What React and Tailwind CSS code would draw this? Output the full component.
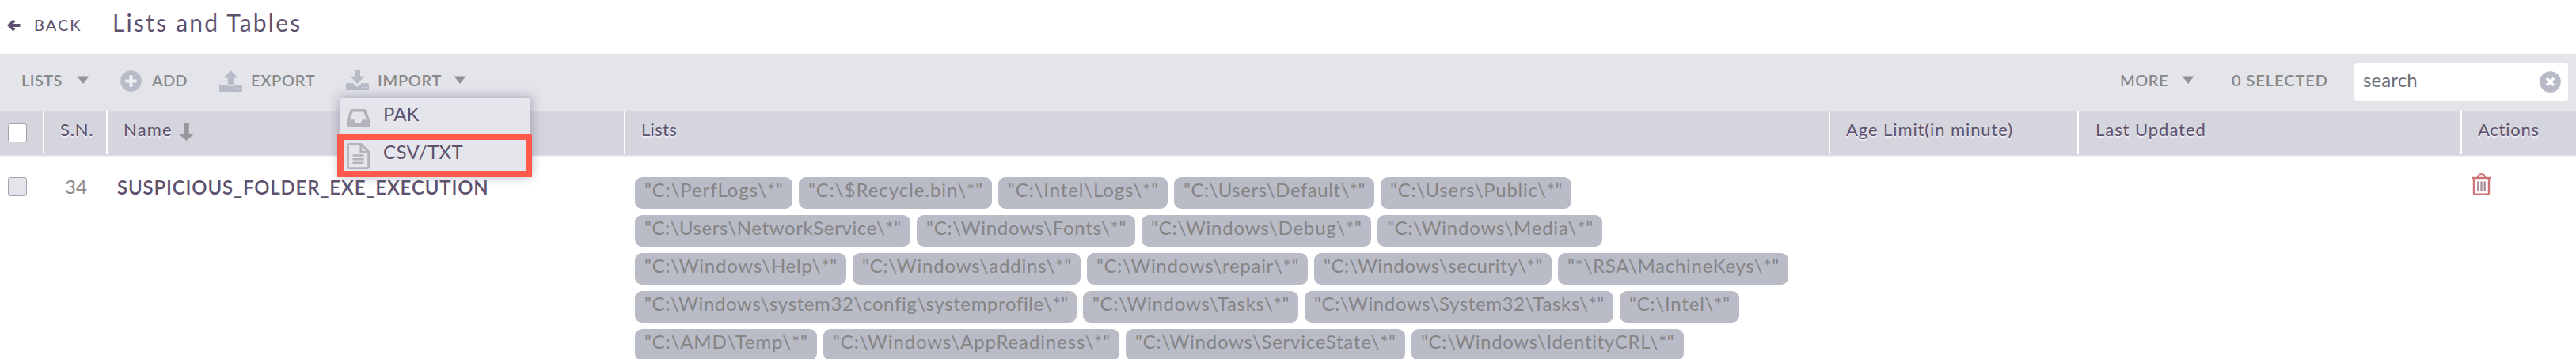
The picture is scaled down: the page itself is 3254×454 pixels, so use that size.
const rows = [
  [
    ['"C:\\PerfLogs\\*"', 'w-[199px] tracking-[0.9px]'],
    ['"C:\\$Recycle.bin\\*"', 'w-[244px] tracking-[0.95px]'],
    ['"C:\\Intel\\Logs\\*"', 'w-[214px] tracking-[0.87px]'],
    ['"C:\\Users\\Default\\*"', 'w-[253px] tracking-[0.55px]'],
    ['"C:\\Users\\Public\\*"', 'w-[241px] tracking-[0.75px]'],
  ],
  [
    ['"C:\\Users\\NetworkService\\*"', 'w-[348px] tracking-[0.6px]'],
    ['"C:\\Windows\\Fonts\\*"', 'w-[276px] tracking-[0.75px]'],
    ['"C:\\Windows\\Debug\\*"', 'w-[290px] tracking-[0.82px]'],
    ['"C:\\Windows\\Media\\*"', 'w-[284px] tracking-[0.78px]'],
  ],
  [
    ['"C:\\Windows\\Help\\*"', 'w-[267px] tracking-[0.77px]'],
    ['"C:\\Windows\\addins\\*"', 'w-[288px] tracking-[0.8px]'],
    ['"C:\\Windows\\repair\\*"', 'w-[279px] tracking-[0.7px]'],
    ['"C:\\Windows\\security\\*"', 'w-[300px] tracking-[0.56px]'],
    ['"*\\RSA\\MachineKeys\\*"', 'w-[291px] tracking-[0.72px]'],
  ],
  [
    ['"C:\\Windows\\system32\\config\\systemprofile\\*"', 'w-[558px] tracking-[0.62px]'],
    ['"C:\\Windows\\Tasks\\*"', 'w-[272px] tracking-[0.72px]'],
    ['"C:\\Windows\\System32\\Tasks\\*"', 'w-[390px] tracking-[0.61px]'],
    ['"C:\\Intel\\*"', 'w-[151px] tracking-[0.8px]'],
  ],
  [
    ['"C:\\AMD\\Temp\\*"', 'w-[230px] tracking-[0.86px]'],
    ['"C:\\Windows\\AppReadiness\\*"', 'w-[374px] tracking-[0.87px]'],
    ['"C:\\Windows\\ServiceState\\*"', 'w-[353px] tracking-[0.74px]'],
    ['"C:\\Windows\\IdentityCRL\\*"', 'w-[344px] tracking-[0.66px]'],
  ],
];

const Caret = ({ className }) => (
  <svg className={`h-[10px] w-4 shrink-0 ${className}`} viewBox="0 0 16 10">
    <path d="M0.5 0.5h15L8 10z" fill="#919196" />
  </svg>
);

const BackIcon = () => (
  <svg className="mt-6 ml-[9px] h-4 w-[17px] shrink-0" viewBox="0 0 17 16">
    <path d="M9 1.8L2.8 8L9 14.2M3 8h13.5" fill="none" stroke="#5d516d" strokeWidth="4" strokeLinejoin="miter" />
  </svg>
);

const AddIcon = () => (
  <svg className="mt-[21px] h-[27px] w-[27px] shrink-0" viewBox="0 0 27 27">
    <circle cx="13.5" cy="13.5" r="13.3" fill="#b9bac7" />
    <path d="M13.5 6.3v14.4M6.3 13.5h14.4" stroke="#eff0f4" strokeWidth="4" />
  </svg>
);

const ExportIcon = () => (
  <svg className="mt-[21px] h-[27px] w-[29px] shrink-0" viewBox="0 0 29 27" fill="#b9bac7">
    <path d="M14.5 0l9 9.5h-5.3v7.2q0 1.3-1.3 1.3h-4.8q-1.3 0-1.3-1.3V9.5H5.5z" />
    <path d="M1.5 18H9q1 2 3 2h5q2 0 3-2h7.5q1.5 0 1.5 1.5v6q0 1.5-1.5 1.5h-26Q0 27 0 25.5v-6Q0 18 1.5 18z" />
    <path d="M20.5 22.5h2v1.5h-2zM24.5 22.5h2v1.5h-2z" fill="#e4e5ea" />
  </svg>
);

const ImportIcon = () => (
  <svg className="mt-5 h-[26px] w-[29px] shrink-0" viewBox="0 0 29 26" fill="#b9bac7">
    <path d="M11.2 0h6.8v8.5h5.5L14.5 18L5.5 8.5h5.7z" />
    <path d="M1.5 17H9l4 4q1.5 1.2 3 0l4-4h7.5q1.5 0 1.5 1.5v6q0 1.5-1.5 1.5h-26Q0 26 0 24.5v-6Q0 17 1.5 17z" />
    <path d="M20.5 21.8h2v1.5h-2zM24.5 21.8h2v1.5h-2z" fill="#e4e5ea" />
  </svg>
);

const InboxIcon = () => (
  <svg className="mt-[14px] h-[23px] w-[29px] shrink-0" viewBox="0 0 29 23" fill="#b3b4bb">
    <path fillRule="evenodd" d="M7 0h15q2 0 2.8 2L29 13v8.5q0 1.5-1.5 1.5h-26Q0 23 0 21.5V13L4.2 2Q5 0 7 0zM7.8 3.5L4 13.2h5.2l2 4h6.6l2-4H25L21.2 3.5z" />
  </svg>
);

const FileIcon = () => (
  <svg className="mt-[9px] h-[33px] w-[29px] shrink-0" viewBox="0 0 29 33" fill="none" stroke="#b3b4bb" strokeWidth="2.8">
    <path d="M3 1.4H18L27.6 11V30q0 1.6-1.6 1.6H3Q1.4 31.6 1.4 30V3Q1.4 1.4 3 1.4z" />
    <path d="M17.8 1.5V11.2H27.5" />
    <path d="M7.5 15.5h14M7.5 20.2h14M7.5 24.9h14" strokeWidth="2.6" />
  </svg>
);

const SortIcon = () => (
  <svg className="mt-4 ml-[8px] h-[22px] w-[19px] shrink-0" viewBox="0 0 19 22" fill="#97979d">
    <path d="M6.2 0h6.6v13.5H19L9.5 22L0 13.5h6.2z" />
  </svg>
);

const ClearIcon = () => (
  <svg className="mt-[10px] h-[27px] w-[27px] shrink-0" viewBox="0 0 27 27">
    <circle cx="13.5" cy="13.5" r="13.3" fill="#b9bac7" />
    <path d="M9 9l9 9M18 9l-9 9" stroke="#fff" strokeWidth="3.8" />
  </svg>
);

const TrashIcon = () => (
  <svg className="mt-[23px] ml-3 h-7 w-[25px] shrink-0" viewBox="0 0 25 28" fill="none" stroke="#cd7277" strokeWidth="2">
    <path d="M0 6h25" strokeWidth="2.4" />
    <path d="M7.5 5.5L9 2.5Q9.6 1.3 11 1.3h3q1.4 0 2 1.2L17.5 5.5" />
    <path d="M3 6.5V25q0 1.8 1.8 1.8h15.4q1.8 0 1.8-1.8V6.5" strokeWidth="2.4" />
    <path d="M8.3 10.5v11.5M12.5 10.5v11.5M16.7 10.5v11.5" stroke="#a58d95" strokeWidth="2.3" />
  </svg>
);

const Th = ({ className, children }) => (
  <div className={`flex h-[55px] shrink-0 border-white text-[22px] leading-[47px] whitespace-nowrap [text-shadow:0_2px_0_#eeeef4] ${className}`}>
    {children}
  </div>
);

export default function App() {
  return (
    <div className="h-[454px] w-[3254px] overflow-hidden bg-white font-['Lato','Liberation_Sans',sans-serif] text-[#5d516d]">
      <header className="flex h-[68px] whitespace-nowrap">
        <BackIcon />
        <span className="ml-[17px] w-[99px] text-xl leading-[63px] tracking-[2px]">BACK</span>
        <h1 className="text-[30px] leading-[57px] tracking-[2.2px]">Lists and Tables</h1>
      </header>

      <div className="relative flex h-[72px] bg-[#e4e5ea] text-xl leading-[66px] font-semibold whitespace-nowrap text-[#888888]">
        <span className="ml-[27px] w-[70px] tracking-[0.4px]">LISTS</span>
        <Caret className="mt-7" />
        <div className="ml-[39px] flex w-[125px]">
          <AddIcon />
          <span className="ml-[13px] tracking-[0.2px]">ADD</span>
        </div>
        <div className="flex w-[160px]">
          <ExportIcon />
          <span className="ml-[11px] tracking-[0.7px]">EXPORT</span>
        </div>
        <div className="flex w-[136px]">
          <ImportIcon />
          <span className="ml-[11px] tracking-[0.7px]">IMPORT</span>
        </div>
        <Caret className="mt-7" />

        <span className="ml-auto w-[78px] tracking-[0.5px]">MORE</span>
        <Caret className="mt-7" />
        <span className="ml-[47px] w-[155px] tracking-[0.95px]">0 SELECTED</span>
        <div className="mt-3 mr-[10px] flex h-12 w-[270px] justify-between rounded-[4px] bg-white pr-[9px] pl-[11px]">
          <span className="text-2xl leading-[42px] font-normal tracking-[0.1px] text-[#6f6f73]">search</span>
          <ClearIcon />
        </div>

        <div className="absolute top-14 left-[430px] z-10 h-[98px] w-[240px] bg-[#e5e6eb] text-2xl font-normal text-[#5d516d] shadow-[0_0_12px_2px_rgba(100,100,130,0.45)]">
          <div className="flex h-12 pl-2 leading-[39px]">
            <InboxIcon />
            <span className="ml-[17px]">PAK</span>
          </div>
          <div className="flex h-[50px] pl-2 leading-[39px]">
            <FileIcon />
            <span className="ml-[17px] tracking-[0.4px]">CSV/TXT</span>
          </div>
          <div className="absolute top-[45px] -left-1 h-[55px] w-[246px] border-8 border-[#ff5a4b]" />
        </div>
      </div>

      <div className="flex h-14 bg-[#d5d5de] shadow-[0_1px_2px_rgba(120,120,150,0.35)]">
        <Th className="w-14 border-r-2">
          <div className="mt-4 ml-[10px] h-6 w-6 rounded-[3px] border border-[#a5a3ae] bg-white" />
        </Th>
        <Th className="w-20 border-r-2 pl-5 tracking-[0.8px]">S.N.</Th>
        <Th className="w-[654px] border-r-2 pl-5 tracking-[1.2px]">
          Name
          <SortIcon />
        </Th>
        <Th className="w-[1522px] border-r-2 pl-5 tracking-[0.3px]">Lists</Th>
        <Th className="w-[314px] border-r-2 pl-5 tracking-[0.9px]">Age Limit(in minute)</Th>
        <Th className="w-[484px] border-r-2 pl-[21px] tracking-[0.95px]">Last Updated</Th>
        <Th className="w-[144px] pl-5 tracking-[0.75px]">Actions</Th>
      </div>

      <div className="flex h-[258px]">
        <div className="w-14 pt-7">
          <div className="ml-[10px] h-6 w-6 rounded-[3px] border border-[#a5a3ae] bg-[#e4e5ea]" />
        </div>
        <div className="w-20 pt-5 pl-[26px] text-2xl leading-10 text-[#888888]">34</div>
        <div className="w-[654px] pt-[21px] pl-3 text-2xl leading-10 font-semibold tracking-[0.84px]">
          SUSPICIOUS_FOLDER_EXE_EXECUTION
        </div>
        <div className="flex w-[1522px] flex-col gap-2 pt-7 pl-3">
          {rows.map((chips, i) => (
            <div key={i} className="flex gap-2">
              {chips.map(([label, cls]) => (
                <span key={label} className={`h-10 shrink-0 rounded-[9px] bg-[#b9bbc7] pl-3 text-2xl leading-8 whitespace-nowrap text-[#858585] ${cls}`}>
                  {label}
                </span>
              ))}
            </div>
          ))}
        </div>
        <div className="w-[314px]" />
        <div className="w-[484px]" />
        <div className="w-[144px]">
          <TrashIcon />
        </div>
      </div>
    </div>
  );
}
